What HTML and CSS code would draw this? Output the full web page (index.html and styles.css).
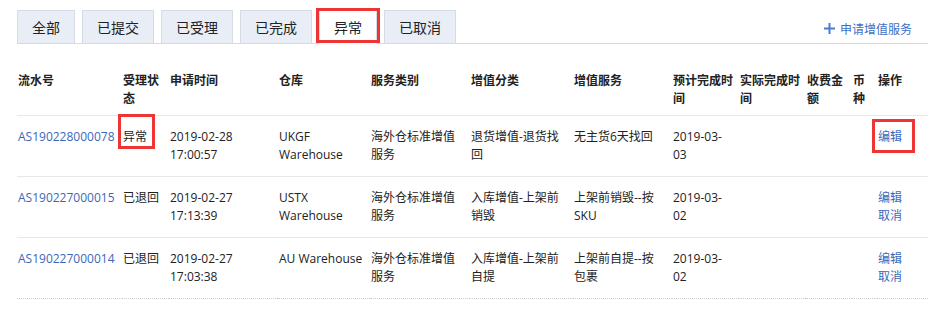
FILE: index.html
```html
<!DOCTYPE html>
<html>
  <head>
    <meta charset="utf-8" />
    <title>增值服务</title>
    <link rel="stylesheet" href="styles.css">
  </head>

  <body>
    <div class="page">
      <div class="tabs">
        <a class="tab">全部</a>
        <a class="tab">已提交</a>
        <a class="tab">已受理</a>
        <a class="tab">已完成</a>
        <a class="tab active mark mark-tab">异常</a>
        <a class="tab">已取消</a>
        <a class="add-link">
          <svg class="plus" width="11" height="11" viewBox="0 0 11 11">
            <path d="M5.5 0v11M0 5.5h11" stroke="currentColor" stroke-width="2" fill="none" />
          </svg>
          申请增值服务
        </a>
      </div>

      <table class="list">
        <colgroup>
          <col class="c-no" />
          <col class="c-status" />
          <col class="c-time" />
          <col class="c-wh" />
          <col class="c-type" />
          <col class="c-cat" />
          <col class="c-service" />
          <col class="c-eta" />
          <col class="c-done" />
          <col class="c-fee" />
          <col class="c-cur" />
          <col class="c-op" />
        </colgroup>
        <thead>
          <tr>
            <th>流水号</th>
            <th>受理状态</th>
            <th>申请时间</th>
            <th>仓库</th>
            <th>服务类别</th>
            <th>增值分类</th>
            <th>增值服务</th>
            <th>预计完成时间</th>
            <th>实际完成时间</th>
            <th>收费金额</th>
            <th>币种</th>
            <th>操作</th>
          </tr>
        </thead>
        <tbody>
          <tr>
            <td><a class="link">AS190228000078</a></td>
            <td><span class="mark mark-status">异常</span></td>
            <td>2019-02-28 17:00:57</td>
            <td>UKGF Warehouse</td>
            <td>海外仓标准增值服务</td>
            <td>退货增值-退货找回</td>
            <td class="service">无主货6天找回</td>
            <td>2019-03-03</td>
            <td></td>
            <td></td>
            <td></td>
            <td><a class="link op mark mark-op">编辑</a></td>
          </tr>
          <tr>
            <td><a class="link">AS190227000015</a></td>
            <td>已退回</td>
            <td>2019-02-27 17:13:39</td>
            <td>USTX Warehouse</td>
            <td>海外仓标准增值服务</td>
            <td>入库增值-上架前销毁</td>
            <td class="service">上架前销毁--按SKU</td>
            <td>2019-03-02</td>
            <td></td>
            <td></td>
            <td></td>
            <td><a class="link op">编辑</a><a class="link op">取消</a></td>
          </tr>
          <tr>
            <td><a class="link">AS190227000014</a></td>
            <td>已退回</td>
            <td>2019-02-27 17:03:38</td>
            <td>AU Warehouse</td>
            <td>海外仓标准增值服务</td>
            <td>入库增值-上架前自提</td>
            <td class="service">上架前自提--按包裹</td>
            <td>2019-03-02</td>
            <td></td>
            <td></td>
            <td></td>
            <td><a class="link op">编辑</a><a class="link op">取消</a></td>
          </tr>
        </tbody>
      </table>
    </div>
  </body>
</html>
```

FILE: styles.css
```css
body {
  margin: 0;
  background-color: #ffffff;
  color: #333333;
  font-family: "Open Sans", "Noto Sans CJK SC", sans-serif;
  font-size: 12px;
}

.page {
  padding: 10px 18px 0 17px;
}

/* tabs */

.tabs {
  display: flex;
  align-items: flex-end;
  gap: 7px;
  border-bottom: 1px solid #d3dae4;
}

.tab {
  height: 32px;
  line-height: 32px;
  padding: 0 14px;
  margin-bottom: -1px;
  border: 1px solid #d5dce6;
  border-bottom: 1px solid #d3dae4;
  background-color: #e9eef6;
  color: #222222;
  font-family: "Noto Sans CJK SC", sans-serif;
  font-size: 14px;
  cursor: pointer;
}

.tab.active {
  background-color: #ffffff;
  border-bottom-color: #ffffff;
}

.add-link {
  display: flex;
  align-items: center;
  gap: 5px;
  align-self: center;
  margin-left: auto;
  margin-right: 16px;
  margin-top: 4px;
  color: #3e6fc4;
  font-family: "Noto Sans CJK SC", sans-serif;
  font-size: 12px;
  cursor: pointer;
}

.plus {
  color: #4a7bd6;
}

/* table */

.list {
  width: 911px;
  margin-top: 15px;
  border-collapse: collapse;
  table-layout: fixed;
}

.c-no { width: 105px; }
.c-status { width: 47px; }
.c-time { width: 109px; }
.c-wh { width: 92px; }
.c-type { width: 100px; }
.c-cat { width: 103px; }
.c-service { width: 99px; }
.c-eta { width: 67px; }
.c-done { width: 67px; }
.c-fee { width: 46px; }
.c-cur { width: 25px; }
.c-op { width: 51px; }

.list th,
.list td {
  padding: 12px 4px 12px 1px;
  line-height: 18px;
  text-align: left;
  vertical-align: top;
  word-wrap: break-word;
}

.list th {
  padding-bottom: 8px;
  color: #222222;
  font-family: "Noto Sans CJK SC", sans-serif;
  font-weight: bold;
}

.list tbody tr {
  border-top: 1px solid #e6e8ee;
}

.list tbody tr:last-child {
  border-bottom: 1px dotted #cccccc;
}

.list td {
  color: #222222;
}

.list td.service {
  padding-right: 10px;
}

.link {
  color: #3c68b8;
  cursor: pointer;
}

.op {
  display: block;
}

/* red annotation boxes */

.mark {
  position: relative;
}

.mark::after {
  content: "";
  position: absolute;
  border: 3px solid #ee3535;
  pointer-events: none;
}

.mark-tab::after {
  top: -3px;
  left: -4px;
  right: -4px;
  bottom: 0;
}

.mark-status::after {
  top: -14px;
  left: -5px;
  right: -8px;
  bottom: -4px;
}

.mark-op::after {
  top: -9px;
  left: -6px;
  right: 9px;
  bottom: -7px;
}
```
